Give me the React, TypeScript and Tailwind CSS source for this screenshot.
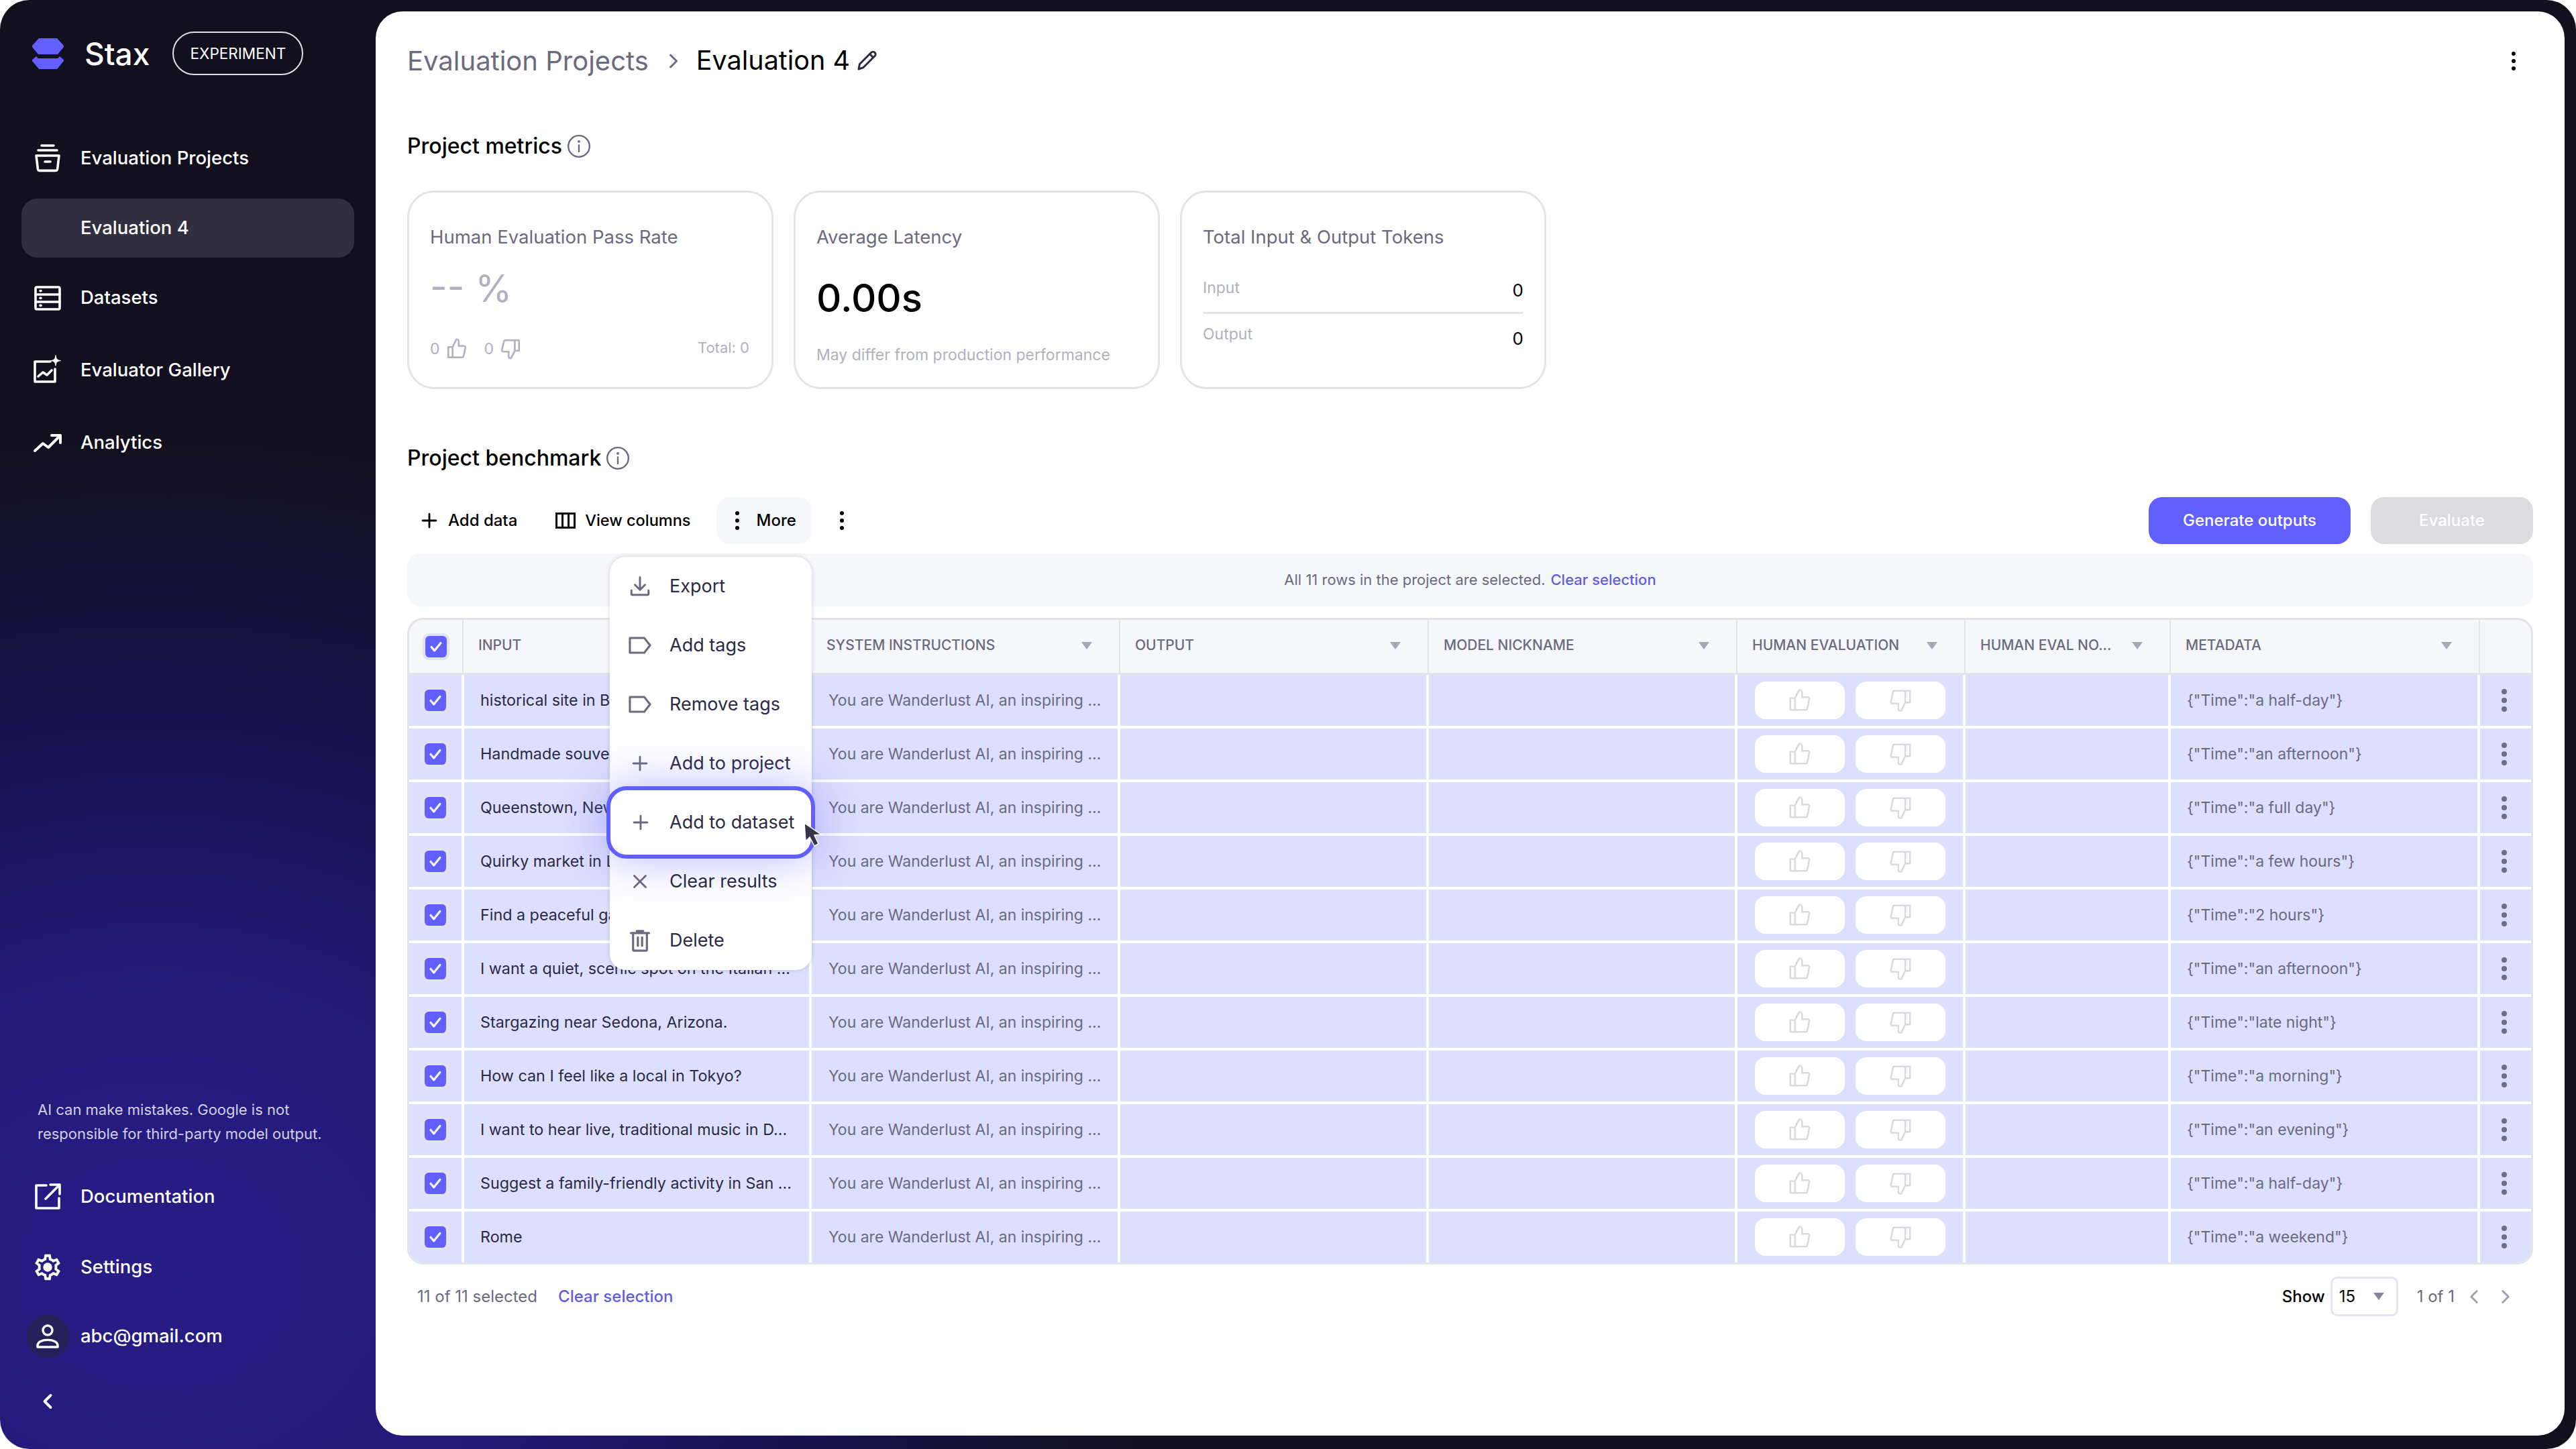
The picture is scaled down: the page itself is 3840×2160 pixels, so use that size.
import { Plus, X, ChevronLeft, ChevronRight } from 'lucide-react'

const rows = [
  ['historical site in Beijing, China', 'a half-day'],
  ['Handmade souvenirs in Oaxaca.', 'an afternoon'],
  ['Queenstown, New Zealand.', 'a full day'],
  ['Quirky market in London.', 'a few hours'],
  ['Find a peaceful garden in Kyoto.', '2 hours'],
  ['I want a quiet, scenic spot on the Italian ...', 'an afternoon'],
  ['Stargazing near Sedona, Arizona.', 'late night'],
  ['How can I feel like a local in Tokyo?', 'a morning'],
  ['I want to hear live, traditional music in D...', 'an evening'],
  ['Suggest a family-friendly activity in San ...', 'a half-day'],
  ['Rome', 'a weekend'],
]

const headers = ['INPUT', 'SYSTEM INSTRUCTIONS', 'OUTPUT', 'MODEL NICKNAME', 'HUMAN EVALUATION', 'HUMAN EVAL NO...', 'METADATA']

function Logo() {
  return (
    <svg width="47" height="46" viewBox="0 0 47 46" fill="#615fff">
      <path d="M10 0H37L47 11V13L38 24H9L0 13V11Z" />
      <path d="M6 27L9 30H38L41 27L47 32V34L37 46H10L0 34V32Z" />
    </svg>
  )
}

function Icon({ size = 48, stroke = 'white', width = 1.8, children }: { size?: number; stroke?: string; width?: number; children: React.ReactNode }) {
  return (
    <svg width={size} height={size} viewBox="0 0 24 24" fill="none" stroke={stroke} strokeWidth={width} strokeLinecap="round" strokeLinejoin="round">
      {children}
    </svg>
  )
}

function ThumbUp({ size = 28, stroke = '#b0b0bf', width = 1.8, down = false }: { size?: number; stroke?: string; width?: number; down?: boolean }) {
  return (
    <svg width={size} height={size} viewBox="0 0 24 24" fill="none" stroke={stroke} strokeWidth={width} strokeLinejoin="round" className={down ? 'rotate-180' : ''}>
      <path d="M7.500 10v11H3V10h4.500zM7.500 10l4-8c1.500 0 2.500 1 2.500 2.500V9h5.500a1.500 1.500 0 0 1 1.500 1.800l-2 9a1.500 1.500 0 0 1-1.500 1.200H7.500" />
    </svg>
  )
}

function Dots({ color = 'bg-black', size = 'size-[6px]', gap = 'gap-[5px]' }: { color?: string; size?: string; gap?: string }) {
  return (
    <div className={`flex flex-col items-center ${gap}`}>
      <span className={`rounded-full ${size} ${color}`} />
      <span className={`rounded-full ${size} ${color}`} />
      <span className={`rounded-full ${size} ${color}`} />
    </div>
  )
}

function Info() {
  return (
    <Icon size={38} stroke="#6b6a80" width={1.5}>
      <circle cx="12" cy="12" r="10" />
      <path d="M12 11v6" />
      <circle cx="12" cy="7.500" r="0.500" fill="#6b6a80" />
    </Icon>
  )
}

function Check() {
  return (
    <span className="rounded-[9px] bg-[#e1e4ee] p-[4px]">
      <span className="flex size-[32px] items-center justify-center rounded-[6px] bg-[#615fff]">
        <svg width="22" height="22" viewBox="0 0 24 24" fill="none" stroke="white" strokeWidth="3.400" strokeLinecap="round" strokeLinejoin="round">
          <path d="M4.500 12.500l5 6L19.500 6" />
        </svg>
      </span>
    </span>
  )
}

function Caret({ color = 'border-t-[#a7a7b5]' }: { color?: string }) {
  return <span className={`h-0 w-0 border-x-[8px] border-t-[11px] border-x-transparent ${color}`} />
}

function NavRow({ icon, label }: { icon?: React.ReactNode; label: string }) {
  return (
    <>
      <span className="mr-[10px] flex w-[78px] justify-center">{icon}</span>
      <span className="text-[27.5px] font-medium text-white">{label}</span>
    </>
  )
}

function NavItem({ icon, label, active = false }: { icon?: React.ReactNode; label: string; active?: boolean }) {
  return (
    <div className={`flex h-[88px] items-center rounded-[24px] ${active ? 'bg-[#322f40]' : ''}`}>
      <NavRow icon={icon} label={label} />
    </div>
  )
}

function MenuItem({ icon, label }: { icon: React.ReactNode; label: string }) {
  return (
    <div className="flex h-[88px] items-center">
      <span className="flex w-[90px] justify-center">{icon}</span>
      <span className="-ml-[1px] text-[27px] text-[#2b2a45]">{label}</span>
    </div>
  )
}

const TagIcon = () => (
  <Icon size={38} stroke="#6b6a80" width={1.9}>
    <path d="M2.500 5h13.500l5.500 7-5.500 7H2.500z" />
  </Icon>
)

export default function App() {
  return (
    <div className="h-[2160px] w-[3840px] bg-white">
      <div className="flex h-full w-full overflow-hidden rounded-[44px] bg-[radial-gradient(ellipse_1500px_1250px_at_230px_1900px,#281c86_0%,#241a78_35%,#181351_65%,#12101f_100%)] font-['Inter',sans-serif]">
        <aside className="flex w-[560px] shrink-0 flex-col px-[32px]">
          <div className="mt-[47px] flex h-[65px] items-center">
            <span className="ml-[16px]"><Logo /></span>
            <span className="ml-[31px] text-[46px] leading-none font-medium text-white">Stax</span>
            <span className="ml-[34px] flex h-[65px] w-[195px] items-center justify-center rounded-full border-[2px] border-[#e0e0e6] text-[22.5px] text-white">EXPERIMENT</span>
          </div>
          <nav className="mt-[80px] flex flex-col gap-y-4">
            <NavItem label="Evaluation Projects" icon={
              <Icon>
                <path d="M7.500 2.500h9M5 6h14" />
                <path d="M3.500 10h17l-1.200 10a1.500 1.500 0 0 1-1.500 1.200H6.200a1.500 1.500 0 0 1-1.500-1.200z" />
                <path d="M10 14.500h4" />
              </Icon>
            } />
            <NavItem label="Evaluation 4" active />
            <NavItem label="Datasets" icon={
              <Icon>
                <rect x="3" y="4" width="18" height="16.500" rx="1" />
                <path d="M3 9.500h18M3 15h18M6.500 6.800h.5M6.500 12.200h.5M6.500 17.700h.5" />
              </Icon>
            } />
          </nav>
          <div className="mt-[20px] flex flex-col gap-y-5">
            <NavItem label="Evaluator Gallery" icon={
              <Icon>
                <path d="M14 5.500H2.500v15h15V11" />
                <path d="M5 16.500l3.500-3 3 2 3.500-3.500" />
                <path d="M18 1c.3 2.600 1.200 3.500 3.800 3.800-2.600.3-3.500 1.200-3.800 3.800-.3-2.600-1.200-3.500-3.800-3.800 2.600-.3 3.500-1.200 3.800-3.800z" fill="white" strokeWidth="0.500" />
              </Icon>
            } />
            <NavItem label="Analytics" icon={
              <Icon width={2}>
                <path d="M2.500 18l6-5.500 4 3L21 7" />
                <path d="M15 6.500h6.500V12" />
              </Icon>
            } />
          </div>
          <div className="mt-auto" />
          <p className="ml-[24px] text-[22px] leading-[36px] whitespace-nowrap text-[#d2d0e6]">AI can make mistakes. Google is not<br />responsible for third-party model output.</p>
          <div className="mt-[32px] flex h-[88px] items-center">
            <NavRow icon={
              <Icon>
                <path d="M11 3.500H3.500v17h17V13" />
                <path d="M14 3h7v7M21 3L10.500 13.500" />
              </Icon>
            } label="Documentation" />
          </div>
          <div className="mt-[17px] flex h-[88px] items-center">
            <NavRow icon={
              <svg width="46" height="46" viewBox="0 0 24 24" fill="white">
                <path d="M19.430 12.980c.04-.32.07-.64.07-.98 0-.34-.03-.66-.07-.98l2.110-1.650c.19-.15.24-.42.12-.64l-2-3.460c-.09-.16-.26-.25-.44-.25-.06 0-.12.01-.17.03l-2.490 1c-.52-.4-1.080-.73-1.690-.98l-.38-2.650C14.460 2.180 14.250 2 14 2h-4c-.25 0-.46.18-.49.42l-.38 2.650c-.61.25-1.170.59-1.690.98l-2.490-1c-.06-.02-.12-.03-.18-.03-.17 0-.34.09-.43.25l-2 3.460c-.13.22-.07.49.12.64l2.110 1.650c-.04.32-.07.65-.07.98 0 .33.03.66.07.98l-2.110 1.650c-.19.15-.24.42-.12.64l2 3.460c.09.16.26.25.44.25.06 0 .12-.01.17-.03l2.490-1c.52.4 1.080.73 1.690.98l.38 2.650c.03.24.24.42.49.42h4c.25 0 .46-.18.49-.42l.38-2.650c.61-.25 1.170-.59 1.690-.98l2.490 1c.06.02.12.03.18.03.17 0 .34-.09.43-.25l2-3.460c.12-.22.07-.49-.12-.64l-2.110-1.650zm-1.980-1.710c.04.31.05.52.05.73 0 .21-.02.43-.05.73l-.14 1.130.89.7 1.080.84-.7 1.210-1.270-.51-1.040-.42-.9.68c-.43.32-.84.56-1.250.73l-1.060.43-.16 1.130-.2 1.350h-1.400l-.19-1.350-.16-1.130-1.060-.43c-.43-.18-.83-.41-1.230-.71l-.91-.7-1.060.43-1.270.51-.7-1.210 1.080-.84.89-.7-.14-1.130c-.03-.31-.05-.54-.05-.74s.02-.43.05-.73l.14-1.130-.89-.7-1.080-.84.7-1.210 1.270.51 1.040.42.9-.68c.43-.32.84-.56 1.250-.73l1.060-.43.16-1.130.2-1.350h1.390l.19 1.350.16 1.130 1.060.43c.43.18.83.41 1.230.71l.91.7 1.060-.43 1.270-.51.7 1.210-1.070.85-.89.7.14 1.130z" />
                <circle cx="12" cy="12" r="3.500" />
              </svg>
            } label="Settings" />
          </div>
          <div className="mt-[15px] flex h-[88px] items-center">
            <NavRow icon={
              <span className="flex size-[64px] shrink-0 items-center justify-center rounded-full bg-[#252158]">
                <Icon size={48} width={1.7}>
                  <circle cx="12" cy="7.500" r="3.500" />
                  <path d="M4.500 19c0-2.800 3.500-4.300 7.500-4.300s7.500 1.500 7.500 4.300v1h-15z" />
                </Icon>
              </span>
            } label="abc@gmail.com" />
          </div>
          <div className="mt-[33px] mb-[51px] flex h-[40px] w-[78px] items-center justify-center">
            <ChevronLeft size={36} color="white" strokeWidth={2.6} />
          </div>
        </aside>

        <main className="relative mt-[17px] mr-[17px] mb-[20px] flex-1 rounded-[40px] bg-white px-[47px] pt-[44px]">
          <div className="flex h-[60px] items-center">
            <span className="text-[40px] text-[#6b6a80]">Evaluation Projects</span>
            <ChevronRight size={36} color="#6b6a80" strokeWidth={2} className="mr-[16px] ml-[19px]" />
            <span className="text-[39.5px] text-black">Evaluation 4</span>
            <svg width="36" height="36" viewBox="0 0 24 24" fill="none" stroke="#2b2a45" strokeWidth="2" strokeLinejoin="round" className="ml-[7px]">
              <path d="M4 20l1-5L16.500 3.500c1-1 2.500-1 3.500 0s1 2.500 0 3.500L8.500 18.500z" />
              <path d="M15 5l4 4" />
            </svg>
            <span className="mr-[26px] ml-auto"><Dots /></span>
          </div>

          <div className="mt-[77px] flex h-[40px] items-center gap-[6px]">
            <h2 className="text-[32px] font-medium text-black">Project metrics</h2>
            <Info />
          </div>

          <div className="mt-[46px] flex gap-[30px]">
            <div className="h-[296px] w-[546px] rounded-[40px] border-[3px] border-[#e3e4ea] px-[31px] pt-[48px]">
              <p className="text-[27.5px] leading-[36px] text-[#6b6a80]">Human Evaluation Pass Rate</p>
              <p className="mt-[28px] h-[62px] text-[56px] leading-[62px] text-[#b0b0bf]">-- %</p>
              <div className="mt-[42px] flex items-center text-[23px] text-[#b0b0bf]">
                <span>0</span>
                <span className="ml-[8px]"><ThumbUp size={34} /></span>
                <span className="ml-[24px]">0</span>
                <span className="ml-[8px]"><ThumbUp size={34} down /></span>
                <span className="mr-[2px] ml-auto -translate-y-[2px] text-[22px]">Total: 0</span>
              </div>
            </div>
            <div className="h-[296px] w-[546px] rounded-[40px] border-[3px] border-[#e3e4ea] px-[31px] pt-[48px]">
              <p className="text-[27.5px] leading-[36px] text-[#6b6a80]">Average Latency</p>
              <p className="mt-[37px] h-[72px] text-[58px] leading-[72px] font-medium text-black">0.00s</p>
              <p className="mt-[33px] text-[23px] leading-[32px] text-[#b0b0bf]">May differ from production performance</p>
            </div>
            <div className="h-[296px] w-[546px] rounded-[40px] border-[3px] border-[#e3e4ea] px-[31px] pt-[48px]">
              <p className="text-[27.5px] leading-[36px] text-[#6b6a80]">Total Input &amp; Output Tokens</p>
              <div className="mt-[42px] flex h-[55px] justify-between border-b-[3px] border-[#e3e4ea] pb-[10px]">
                <span className="text-[23px] leading-[32px] text-[#b0b0bf]">Input</span>
                <span className="mt-[4px] text-[26px] leading-[32px] text-black">0</span>
              </div>
              <div className="mt-[14px] flex justify-between">
                <span className="text-[23px] leading-[32px] text-[#b0b0bf]">Output</span>
                <span className="mt-[7px] text-[26px] leading-[32px] text-black">0</span>
              </div>
            </div>
          </div>

          <div className="mt-[83px] flex h-[40px] items-center gap-[6px]">
            <h2 className="text-[32px] font-medium text-black">Project benchmark</h2>
            <Info />
          </div>

          <div className="mt-[38px] flex h-[70px] items-center text-[24px] font-medium text-black">
            <Plus size={34} strokeWidth={2} className="ml-[16px]" />
            <span className="ml-[11px]">Add data</span>
            <svg width="36" height="36" viewBox="0 0 24 24" fill="none" stroke="black" strokeWidth="2" className="ml-[54px]">
              <rect x="3" y="5" width="18" height="14" />
              <path d="M9 5v14M15 5v14" />
            </svg>
            <span className="ml-[11px] text-[23.5px]">View columns</span>
            <div className="ml-[38px] flex h-[70px] w-[142px] items-center rounded-[20px] bg-[#f6f7fb]">
              <span className="ml-[28px]"><Dots /></span>
              <span className="ml-[26px]">More</span>
            </div>
            <span className="ml-[42px]"><Dots /></span>
            <div className="ml-auto flex h-[70px] w-[301px] items-center justify-center rounded-[20px] bg-[#615fff] text-white">Generate outputs</div>
            <div className="ml-[30px] flex h-[70px] w-[242px] items-center justify-center rounded-[20px] bg-[#dcdce0] text-white">Evaluate</div>
          </div>

          <div className="mt-[14px] flex h-[79px] items-center justify-center rounded-[20px] bg-[#f6f7fb] text-[22px] text-[#6b6a80]">
            <span>All 11 rows in the project are selected.</span>
            <span className="ml-[8px] font-medium text-[#5f5ce8]">Clear selection</span>
          </div>

          <div className="mt-[17px] overflow-hidden rounded-[24px] border-[3px] border-[#e3e4ea]">
            <div className="grid h-[82px] grid-cols-[79px_517px_458px_458px_458px_338px_304px_459px_1fr] gap-x-[2px] border-b-[3px] border-[#e3e4ea] bg-[#e3e4ea]">
              <div className="flex items-center justify-center bg-[#f6f7fb]"><Check /></div>
              {headers.map(h => (
                <div key={h} className="flex items-center justify-between bg-[#f6f7fb] pr-[40px] pb-[3px] pl-[22px] text-[21px] font-medium whitespace-nowrap text-[#6b6a80]">
                  <span>{h}</span>
                  <Caret />
                </div>
              ))}
              <div className="bg-[#f6f7fb]" />
            </div>
            <div className="flex flex-col gap-y-[4px]">
              {rows.map(([text, time]) => (
                <div key={text} className="grid h-[76px] grid-cols-[78px_514px_456px_456px_456px_336px_302px_457px_1fr] gap-x-[4px] text-[23px]">
                  <div className="flex items-center justify-center bg-[#dcdffd]"><Check /></div>
                  <div className="flex items-center overflow-hidden bg-[#dcdffd] pl-[24px] text-[23.3px] whitespace-nowrap text-[#2b2a45]">{text}</div>
                  <div className="flex items-center bg-[#dcdffd] pl-[25px] whitespace-nowrap text-[#6b6a80]">You are Wanderlust AI, an inspiring ...</div>
                  <div className="bg-[#dcdffd]" />
                  <div className="bg-[#dcdffd]" />
                  <div className="flex items-center gap-[16px] bg-[#dcdffd] pl-[26px]">
                    <span className="flex h-[56px] w-[134px] items-center justify-center rounded-[16px] bg-white"><ThumbUp size={38} stroke="#d8d9e2" width={1.6} /></span>
                    <span className="flex h-[56px] w-[134px] items-center justify-center rounded-[16px] bg-white"><ThumbUp size={38} stroke="#d8d9e2" width={1.6} down /></span>
                  </div>
                  <div className="bg-[#dcdffd]" />
                  <div className="flex items-center bg-[#dcdffd] pl-[24px] whitespace-nowrap text-[#6b6a80]">{`{"Time":"${time}"}`}</div>
                  <div className="flex items-center justify-center bg-[#dcdffd] pr-[4px]"><Dots color="bg-[#6f6e85]" size="size-[8px]" gap="gap-[5px]" /></div>
                </div>
              ))}
            </div>
          </div>

          <div className="mt-[18px] flex h-[59px] items-center text-[24px]">
            <span className="ml-[15px] text-[#6b6a80]">11 of 11 selected</span>
            <span className="ml-[31px] font-medium text-[#5f5ce8]">Clear selection</span>
            <span className="ml-auto font-medium text-black">Show</span>
            <div className="ml-[8px] flex h-[59px] w-[101px] items-center justify-between rounded-[10px] border-[3px] border-[#e3e6f0] pr-[18px] pl-[10px] text-black">
              <span>15</span>
              <Caret color="border-t-[#85849a]" />
            </div>
            <span className="ml-[28px] text-[#6b6a80]">1 of 1</span>
            <ChevronLeft size={34} color="#a0a0ae" strokeWidth={2} className="ml-[12px]" />
            <ChevronRight size={34} color="#a0a0ae" strokeWidth={2} className="mr-[24px] ml-[13px]" />
          </div>

          {/* dropdown opened from More */}
          <div className="absolute top-[813px] left-[349px] z-10 w-[301px] rounded-[24px] bg-white shadow-[0_0_6px_rgba(40,40,80,0.18)]">
            <MenuItem label="Export" icon={
              <Icon size={36} stroke="#6b6a80" width={2}>
                <path d="M12 3v12M7 10.500l5 5 5-5M3.500 16v3.500a1 1 0 0 0 1 1h15a1 1 0 0 0 1-1V16" />
              </Icon>
            } />
            <MenuItem label="Add tags" icon={<TagIcon />} />
            <MenuItem label="Remove tags" icon={<TagIcon />} />
            <MenuItem label="Add to project" icon={<Plus size={34} color="#6b6a80" strokeWidth={2} />} />
            <div className="relative z-10 -mx-[5px] -my-[10px] flex h-[108px] items-center rounded-[30px] border-[6px] border-[#615fff] bg-white shadow-[0_0_70px_rgba(97,95,255,0.45)]">
              <span className="flex w-[89px] justify-center"><Plus size={34} color="#6b6a80" strokeWidth={2} /></span>
              <span className="-ml-[1px] text-[27px] text-[#2b2a45]">Add to dataset</span>
              <svg width="34" height="40" viewBox="0 0 34 40" className="absolute top-[47px] left-[286px]">
                <path d="M3 2L5 29L11 23L18 36L24 33L18 20L28 19z" fill="#35344a" stroke="white" strokeWidth="1.500" />
              </svg>
            </div>
            <div className="relative z-20">
              <MenuItem label="Clear results" icon={<X size={34} color="#6b6a80" strokeWidth={2} />} />
              <MenuItem label="Delete" icon={
                <Icon size={38} stroke="#6b6a80" width={2}>
                  <path d="M3.500 5h17M9 3h6M5.500 5v15.500a1 1 0 0 0 1 1h11a1 1 0 0 0 1-1V5M10 9v8M14 9v8" />
                </Icon>
              } />
            </div>
          </div>
        </main>
      </div>
    </div>
  )
}
